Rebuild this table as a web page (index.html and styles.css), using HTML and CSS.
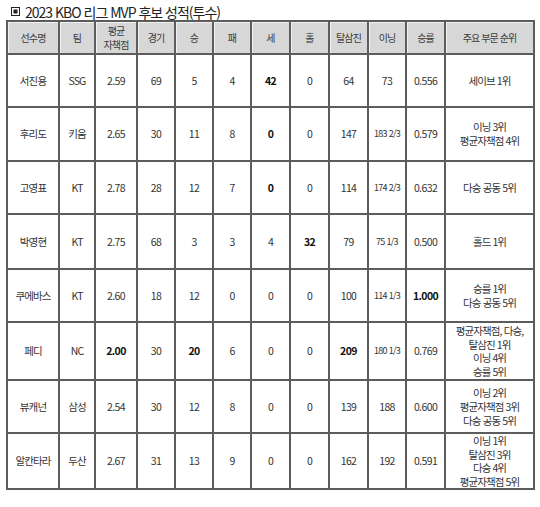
FILE: index.html
```html
<!DOCTYPE html>
<html lang="ko">
<head>
<meta charset="utf-8">
<link rel="stylesheet" href="styles.css">
</head>
<body>
<div class="page">
  <h1 class="title"><span class="mark"></span>2023 KBO 리그 MVP 후보 성적(투수)</h1>
  <table class="stats">
    <colgroup>
      <col style="width:52px"><col style="width:36px"><col style="width:42px"><col style="width:38px">
      <col style="width:38px"><col style="width:38px"><col style="width:39px"><col style="width:39px">
      <col style="width:39px"><col style="width:38px"><col style="width:39px"><col style="width:89px">
    </colgroup>
    <thead>
      <tr class="hrow">
        <th>선수명</th><th>팀</th><th>평균<br>자책점</th><th>경기</th><th>승</th><th>패</th><th>세</th><th>홀</th><th>탈삼진</th><th>이닝</th><th>승률</th><th>주요 부문 순위</th>
      </tr>
    </thead>
    <tbody>
      <tr class="r1">
        <td>서진용</td><td>SSG</td><td class="n">2.59</td><td class="n">69</td><td class="n">5</td><td class="n">4</td><td class="n b">42</td><td class="n">0</td><td class="n">64</td><td class="n">73</td><td class="n">0.556</td><td>세이브 1위</td>
      </tr>
      <tr class="r2">
        <td>후리도</td><td>키움</td><td class="n">2.65</td><td class="n">30</td><td class="n">11</td><td class="n">8</td><td class="n b">0</td><td class="n">0</td><td class="n">147</td><td class="n s">183 2/3</td><td class="n">0.579</td><td>이닝 3위<br>평균자책점 4위</td>
      </tr>
      <tr class="r3">
        <td>고영표</td><td>KT</td><td class="n">2.78</td><td class="n">28</td><td class="n">12</td><td class="n">7</td><td class="n b">0</td><td class="n">0</td><td class="n">114</td><td class="n s">174 2/3</td><td class="n">0.632</td><td>다승 공동 5위</td>
      </tr>
      <tr class="r4">
        <td>박영현</td><td>KT</td><td class="n">2.75</td><td class="n">68</td><td class="n">3</td><td class="n">3</td><td class="n">4</td><td class="n b">32</td><td class="n">79</td><td class="n s">75 1/3</td><td class="n">0.500</td><td>홀드 1위</td>
      </tr>
      <tr class="r5">
        <td>쿠에바스</td><td>KT</td><td class="n">2.60</td><td class="n">18</td><td class="n">12</td><td class="n">0</td><td class="n">0</td><td class="n">0</td><td class="n">100</td><td class="n s">114 1/3</td><td class="n b">1.000</td><td>승률 1위<br>다승 공동 5위</td>
      </tr>
      <tr class="r6">
        <td>페디</td><td>NC</td><td class="n b">2.00</td><td class="n">30</td><td class="n b">20</td><td class="n">6</td><td class="n">0</td><td class="n">0</td><td class="n b">209</td><td class="n s">180 1/3</td><td class="n">0.769</td><td class="multi">평균자책점, 다승,<br>탈삼진 1위<br>이닝 4위<br>승률 5위</td>
      </tr>
      <tr class="r7">
        <td>뷰캐넌</td><td>삼성</td><td class="n">2.54</td><td class="n">30</td><td class="n">12</td><td class="n">8</td><td class="n">0</td><td class="n">0</td><td class="n">139</td><td class="n">188</td><td class="n">0.600</td><td>이닝 2위<br>평균자책점 3위<br>다승 공동 5위</td>
      </tr>
      <tr class="r8">
        <td>알칸타라</td><td>두산</td><td class="n">2.67</td><td class="n">31</td><td class="n">13</td><td class="n">9</td><td class="n">0</td><td class="n">0</td><td class="n">162</td><td class="n">192</td><td class="n">0.591</td><td class="multi">이닝 1위<br>탈삼진 3위<br>다승 4위<br>평균자책점 5위</td>
      </tr>
    </tbody>
  </table>
</div>
</body>
</html>
```

FILE: styles.css
```css
html, body {
  margin: 0;
  padding: 0;
  background: #ffffff;
}
.page {
  width: 540px;
  height: 507px;
  overflow: hidden;
  font-family: "Noto Sans CJK KR", "Noto Sans", sans-serif;
  color: #333333;
}
.title {
  margin: 0;
  padding: 3px 0 0 11px;
  height: 17px;
  font-size: 14px;
  font-weight: normal;
  line-height: 16px;
  color: #222222;
  letter-spacing: -1px;
  display: flex;
  align-items: center;
}
.mark {
  display: inline-block;
  width: 7px;
  height: 7px;
  border: 1.5px solid #222;
  box-shadow: inset 0 0 0 1.5px #fff, inset 0 0 0 4px #222;
  margin-right: 5px;
}
.stats {
  margin-left: 6px;
  width: 527px;
  table-layout: fixed;
  border-collapse: collapse;
  border: 2px solid #2a2a2a;
}
.stats th, .stats td {
  border: 2px solid #5c5c5c;
  padding: 0;
  text-align: center;
  vertical-align: middle;
  font-size: 10.5px;
  line-height: 14px;
  letter-spacing: -0.9px;
}
.stats th {
  background: #d7d7d7;
  font-weight: normal;
  font-size: 10px;
  line-height: 14px;
  color: #3a3a3a;
  box-shadow: inset 1px 1px 0 #f2f2f2;
}
.stats .n {
  letter-spacing: -0.6px;
}
.stats .s {
  font-size: 9px;
  letter-spacing: -0.7px;
}
.stats .b {
  font-weight: bold;
  color: #111;
}
.stats .multi {
  line-height: 13.5px;
}
.hrow { height: 33px; }
.r1 { height: 53px; }
.r2 { height: 54px; }
.r3 { height: 53px; }
.r4 { height: 55px; }
.r5 { height: 53px; }
.r6 { height: 58px; }
.r7 { height: 53px; }
.r8 { height: 56px; }
```
